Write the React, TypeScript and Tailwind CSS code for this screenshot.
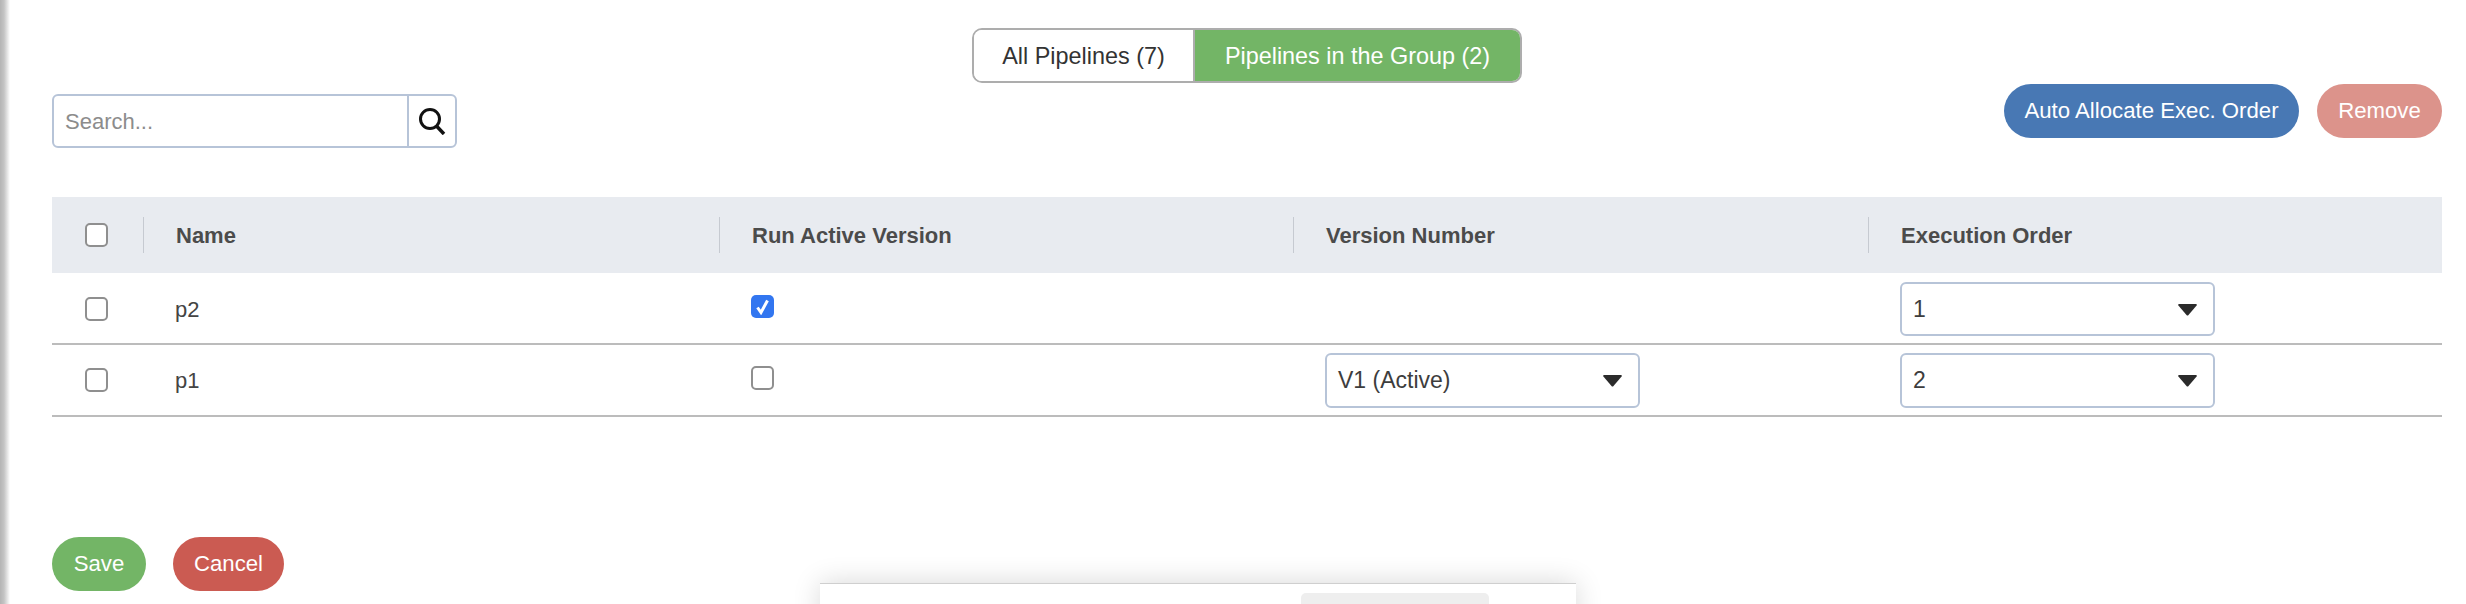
import { ReactNode } from 'react';

const gridCols = 'grid grid-cols-[91px_576px_574px_575px_574px]';

function Box({ checked = false }: { checked?: boolean }) {
  if (checked) {
    return (
      <span className="flex h-[23px] w-[23px] items-center justify-center rounded-[5px] bg-[#3276f0]">
        <svg width="15" height="17" viewBox="0 0 15 17" fill="none">
          <path d="M2.5 9.5 L6 14.5 L12.5 2.5" stroke="#fff" strokeWidth="3" />
        </svg>
      </span>
    );
  }
  return <span className="block h-[24px] w-[23px] rounded-[5px] border-2 border-[#8f8f8f] bg-white" />;
}

function Dropdown({ value, height = 'h-[55px]' }: { value: string; height?: string }) {
  return (
    <div className={`flex w-[315px] items-center justify-between rounded-[6px] border-2 border-[#b7c4d8] bg-white pl-[11px] pr-[15px] text-[23px] text-[#3d3d3d] ${height}`}>
      <span>{value}</span>
      <svg width="21" height="13" viewBox="0 0 21 13">
        <path d="M2 1 H19 Q20.500 1 19.600 2.500 L11.500 12 Q10.500 13 9.500 12 L1.400 2.500 Q0.500 1 2 1 Z" fill="#2b2b2b" />
      </svg>
    </div>
  );
}

function Pill({ children, className }: { children: ReactNode; className: string }) {
  return (
    <button className={`flex h-[54px] items-center justify-center rounded-full text-[22.2px] text-white ${className}`}>
      {children}
    </button>
  );
}

function HeadCell({ label }: { label: string }) {
  return (
    <div className="flex items-center gap-[32px]">
      <span className="h-[36px] w-[1px] bg-[#c6cad1]" />
      <span className="text-[22px] font-bold text-[#4b4b4b]">{label}</span>
    </div>
  );
}

export default function App() {
  return (
    <div className="relative flex h-[604px] w-[2466px] overflow-hidden bg-white font-['Liberation_Sans',Arial,sans-serif]">
      {/* page edge */}
      <div className="h-full w-[10px] shrink-0 bg-gradient-to-r from-[#b4b4b4] via-[#c4c4c4] via-40% to-white" />

      <div className="ml-[42px] w-[2390px]">
        {/* Tabs */}
        <div className="ml-[920px] mt-[28px] flex h-[55px] w-[550px] overflow-hidden rounded-[10px] border-2 border-[#adadad] pt-0 text-[23.4px]">
          <div className="flex w-[221px] items-center justify-center border-r-2 border-[#adadad] bg-white pt-[2px] text-[#333]">
            All Pipelines (7)
          </div>
          <div className="flex flex-1 items-center justify-center bg-[#73b566] pt-[2px] text-white">
            Pipelines in the Group (2)
          </div>
        </div>

        {/* Toolbar */}
        <div className="mt-[1px] flex h-[113px] items-start justify-between">
          <div className="mt-[10px] flex h-[54px] w-[405px] rounded-[6px] border-2 border-[#b7c4d8] bg-white">
            <input
              placeholder="Search..."
              className="min-w-0 flex-1 bg-transparent pl-[11px] text-[22px] text-[#333] outline-none placeholder:text-[#8c8c8c]"
            />
            <div className="flex w-[48px] items-center justify-center border-l-2 border-[#b7c4d8]">
              <svg width="28" height="28" viewBox="0 0 28 28" fill="none" stroke="#111" strokeWidth="3">
                <circle cx="12" cy="12" r="9.500" />
                <path d="M18.500 19 L26 27" strokeWidth="3.500" />
              </svg>
            </div>
          </div>
          <div className="flex gap-[18px]">
            <Pill className="w-[295px] bg-[#4878b4]">Auto Allocate Exec. Order</Pill>
            <Pill className="w-[125px] bg-[#dc938b]">Remove</Pill>
          </div>
        </div>

        {/* Table */}
        <div className={`${gridCols} h-[76px] bg-[#e8ebf0]`}>
          <div className="flex items-center pl-[33px]">
            <Box />
          </div>
          <HeadCell label="Name" />
          <HeadCell label="Run Active Version" />
          <HeadCell label="Version Number" />
          <HeadCell label="Execution Order" />
        </div>

        <div className={`${gridCols} h-[72px] items-center border-b-2 border-[#bcbcbc] pt-[2px] text-[22px] text-[#444]`}>
          <div className="pl-[33px]">
            <Box />
          </div>
          <div className="pl-[32px]">p2</div>
          <div className="mb-[6px] pl-[32px]">
            <Box checked />
          </div>
          <div />
          <div className="pl-[32px]">
            <Dropdown value="1" height="h-[54px]" />
          </div>
        </div>

        <div className={`${gridCols} h-[72px] items-center border-b-2 border-[#bcbcbc] text-[22px] text-[#444]`}>
          <div className="pl-[33px]">
            <Box />
          </div>
          <div className="pl-[32px]">p1</div>
          <div className="mb-[4px] pl-[32px]">
            <Box />
          </div>
          <div className="pl-[32px]">
            <Dropdown value="V1 (Active)" />
          </div>
          <div className="pl-[32px]">
            <Dropdown value="2" />
          </div>
        </div>

        {/* Footer */}
        <div className="mt-[120px] flex gap-[27px]">
          <Pill className="w-[94px] bg-[#73b566]">Save</Pill>
          <Pill className="w-[111px] bg-[#cb5b52]">Cancel</Pill>
        </div>
      </div>

      {/* Popup peeking in at the bottom */}
      <div className="absolute left-[820px] top-[583px] h-[40px] w-[756px] border-t border-[#cfcfcf] bg-white pt-[9px] shadow-[0_0_28px_rgba(0,0,0,0.16)]">
        <div className="ml-[481px] h-[30px] w-[188px] rounded-t-[5px] bg-[#eeeeee]" />
      </div>
    </div>
  );
}
